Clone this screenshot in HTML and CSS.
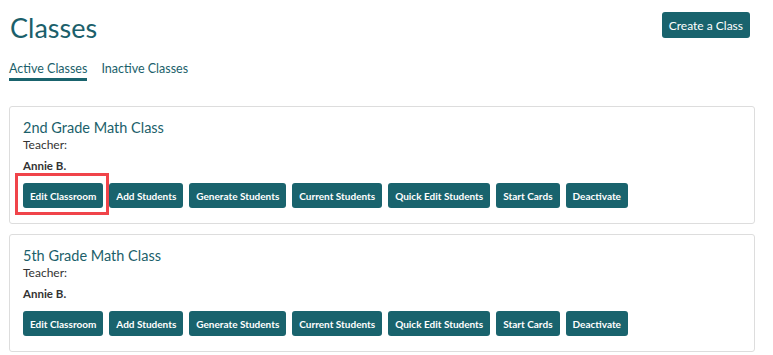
FILE: index.html
```html
<!DOCTYPE html>
<html lang="en">
<head>
    <meta charset="UTF-8">
    <meta name="viewport" content="width=device-width, initial-scale=1.0">
    <title>Classes</title>
    <link rel="stylesheet" href="styles.css">
</head>
<body>
    <div class="page">
        <header class="page-head">
            <h1>Classes</h1>
            <button class="create-btn">Create a Class</button>
        </header>

        <nav class="tabs">
            <a href="#" class="tab active">Active Classes</a>
            <a href="#" class="tab">Inactive Classes</a>
        </nav>

        <!-- class cards -->
        <div class="card">
            <h3>2nd Grade Math Class</h3>
            <p class="label">Teacher:</p>
            <p class="teacher">Annie B.</p>
            <div class="actions">
                <button class="btn highlight">Edit Classroom</button>
                <button class="btn">Add Students</button>
                <button class="btn">Generate Students</button>
                <button class="btn">Current Students</button>
                <button class="btn">Quick Edit Students</button>
                <button class="btn">Start Cards</button>
                <button class="btn">Deactivate</button>
            </div>
        </div>

        <div class="card">
            <h3>5th Grade Math Class</h3>
            <p class="label">Teacher:</p>
            <p class="teacher">Annie B.</p>
            <div class="actions">
                <button class="btn">Edit Classroom</button>
                <button class="btn">Add Students</button>
                <button class="btn">Generate Students</button>
                <button class="btn">Current Students</button>
                <button class="btn">Quick Edit Students</button>
                <button class="btn">Start Cards</button>
                <button class="btn">Deactivate</button>
            </div>
        </div>
    </div>
</body>
</html>
```

FILE: styles.css
```css
body {
    font-family: Lato, "Liberation Sans", sans-serif;
    color: #333;
    margin: 0;
    padding: 0;
    background-color: #fff;
}

.page {
    padding: 11px 18px 0 9px;
}

.page-head {
    display: flex;
    justify-content: space-between;
    align-items: flex-start;
}

.page-head h1 {
    margin: 0 0 0 1px;
    font-size: 27px;
    font-weight: 400;
    color: #1b5f6b; /* teal */
    line-height: 34px;
}

.create-btn {
    font-family: inherit;
    font-size: 12px;
    color: #fff;
    background-color: #19636d;
    border: none;
    border-radius: 3px;
    height: 26px;
    padding: 0 7px;
    margin: 1px 5px 0 0;
}

.tabs {
    display: flex;
    gap: 14px;
    margin-top: 16px;
}

.tab {
    text-decoration: none;
    color: #1b5f6b;
    font-size: 12.5px;
    padding-bottom: 2px;
    border-bottom: 3px solid transparent;
}

.tab.active {
    border-bottom-color: #19636d;
}

.card {
    border: 1px solid #ddd;
    border-radius: 3px;
    padding: 11px 13px 15px;
    margin-top: 25px;
}

.card + .card {
    margin-top: 10px;
}

.card h3 {
    margin: 0;
    font-size: 14.5px;
    font-weight: 400;
    color: #1b5f6b;
    line-height: 20px;
}

.label {
    margin: 0;
    font-size: 12px;
    color: #333;
    line-height: 14px;
}

.teacher {
    margin: 6px 0 0;
    font-size: 11.5px;
    font-weight: 700;
    color: #333;
    line-height: 16px;
}

.actions {
    display: flex;
    gap: 6px;
    margin-top: 9px;
}

.btn {
    font-family: inherit;
    font-size: 10px;
    font-weight: 700;
    color: #fff;
    background-color: #19636d;
    border: none;
    border-radius: 3px;
    height: 25px;
    padding: 0 7px;
}

/* red box round the first button */
.btn.highlight {
    position: relative;
}

.btn.highlight::after {
    content: "";
    position: absolute;
    left: -8px;
    right: -6px;
    top: -10px;
    bottom: -7px;
    border: 3px solid #f0444a;
}
```
